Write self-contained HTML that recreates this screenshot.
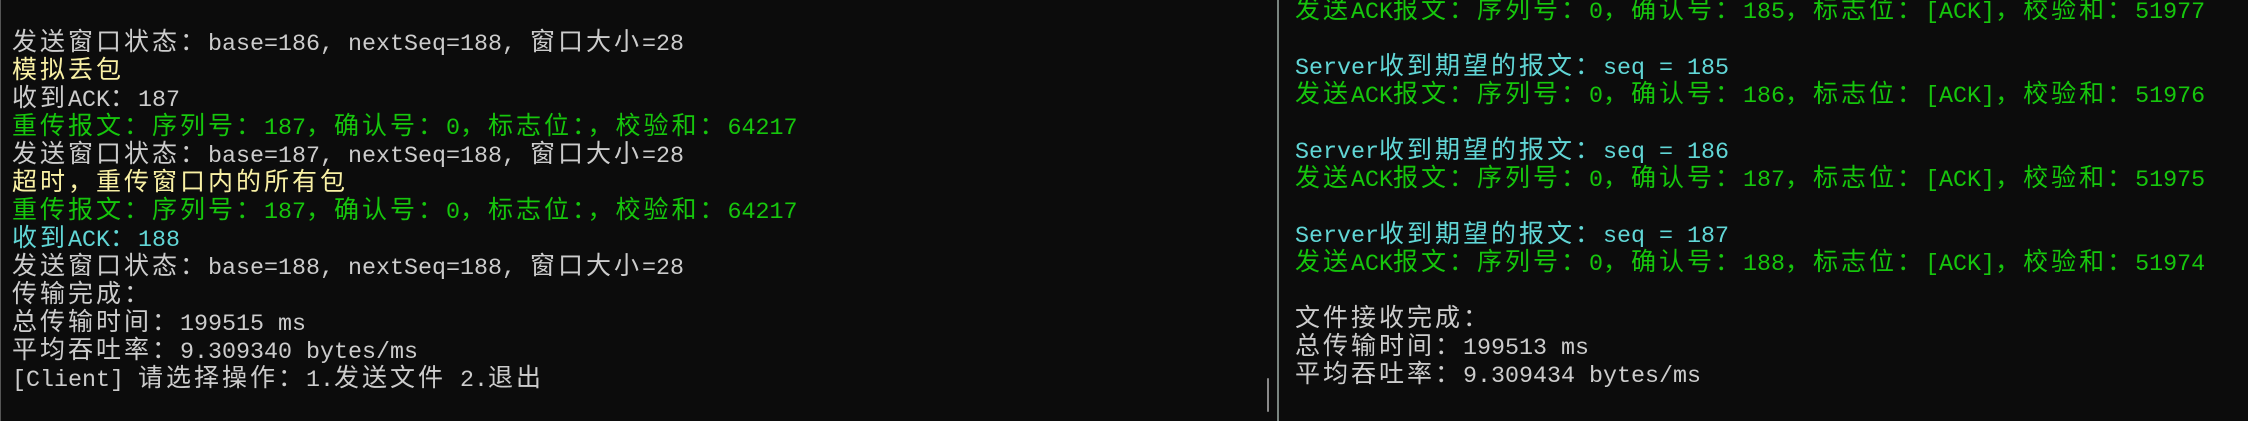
<!DOCTYPE html>
<html><head><meta charset="utf-8"><style>
html,body{margin:0;padding:0;background:#0c0c0c;width:2248px;height:421px;overflow:hidden;position:relative}
.p{position:absolute;font-family:"Liberation Mono","Noto Sans CJK SC",monospace;font-size:23.33px;color:#cccccc}
.p div{height:28px;line-height:28px;white-space:pre}
.c{font-family:"Noto Sans CJK SC","WenQuanYi Zen Hei",sans-serif;font-size:25px;letter-spacing:3px;line-height:28px}
.w{color:#cccccc}.y{color:#f9f1a5}.g{color:#16c60c}.b{color:#61d6d6}
</style></head><body>
<div style="position:absolute;left:0;top:0;width:1px;height:421px;background:#555"></div>
<div style="position:absolute;left:1277px;top:0;width:2px;height:421px;background:#7a8580"></div>
<div style="position:absolute;left:1267px;top:378px;width:2px;height:34px;background:#8a8a8a;border-radius:1px"></div>
<div class="p" style="left:12px;top:26px"><div class="w"><span class="c">发送窗口状态：</span>base=186, nextSeq=188, <span class="c">窗口大小</span>=28</div><div class="y"><span class="c">模拟丢包</span></div><div class="w"><span class="c">收到</span>ACK<span class="c">：</span>187</div><div class="g"><span class="c">重传报文：序列号：</span>187<span class="c">，确认号：</span>0<span class="c">，标志位：，校验和：</span>64217</div><div class="w"><span class="c">发送窗口状态：</span>base=187, nextSeq=188, <span class="c">窗口大小</span>=28</div><div class="y"><span class="c">超时，重传窗口内的所有包</span></div><div class="g"><span class="c">重传报文：序列号：</span>187<span class="c">，确认号：</span>0<span class="c">，标志位：，校验和：</span>64217</div><div class="b"><span class="c">收到</span>ACK<span class="c">：</span>188</div><div class="w"><span class="c">发送窗口状态：</span>base=188, nextSeq=188, <span class="c">窗口大小</span>=28</div><div class="w"><span class="c">传输完成：</span></div><div class="w"><span class="c">总传输时间：</span>199515 ms</div><div class="w"><span class="c">平均吞吐率：</span>9.309340 bytes/ms</div><div class="w">[Client] <span class="c">请选择操作：</span>1.<span class="c">发送文件</span> 2.<span class="c">退出</span></div></div>
<div class="p" style="left:1295px;top:-6px"><div class="g"><span class="c">发送</span>ACK<span class="c">报文：序列号：</span>0<span class="c">，确认号：</span>185<span class="c">，标志位：</span>[ACK]<span class="c">，校验和：</span>51977</div><div></div><div class="b">Server<span class="c">收到期望的报文：</span>seq = 185</div><div class="g"><span class="c">发送</span>ACK<span class="c">报文：序列号：</span>0<span class="c">，确认号：</span>186<span class="c">，标志位：</span>[ACK]<span class="c">，校验和：</span>51976</div><div></div><div class="b">Server<span class="c">收到期望的报文：</span>seq = 186</div><div class="g"><span class="c">发送</span>ACK<span class="c">报文：序列号：</span>0<span class="c">，确认号：</span>187<span class="c">，标志位：</span>[ACK]<span class="c">，校验和：</span>51975</div><div></div><div class="b">Server<span class="c">收到期望的报文：</span>seq = 187</div><div class="g"><span class="c">发送</span>ACK<span class="c">报文：序列号：</span>0<span class="c">，确认号：</span>188<span class="c">，标志位：</span>[ACK]<span class="c">，校验和：</span>51974</div><div></div><div class="w"><span class="c">文件接收完成：</span></div><div class="w"><span class="c">总传输时间：</span>199513 ms</div><div class="w"><span class="c">平均吞吐率：</span>9.309434 bytes/ms</div></div>
</body></html>
